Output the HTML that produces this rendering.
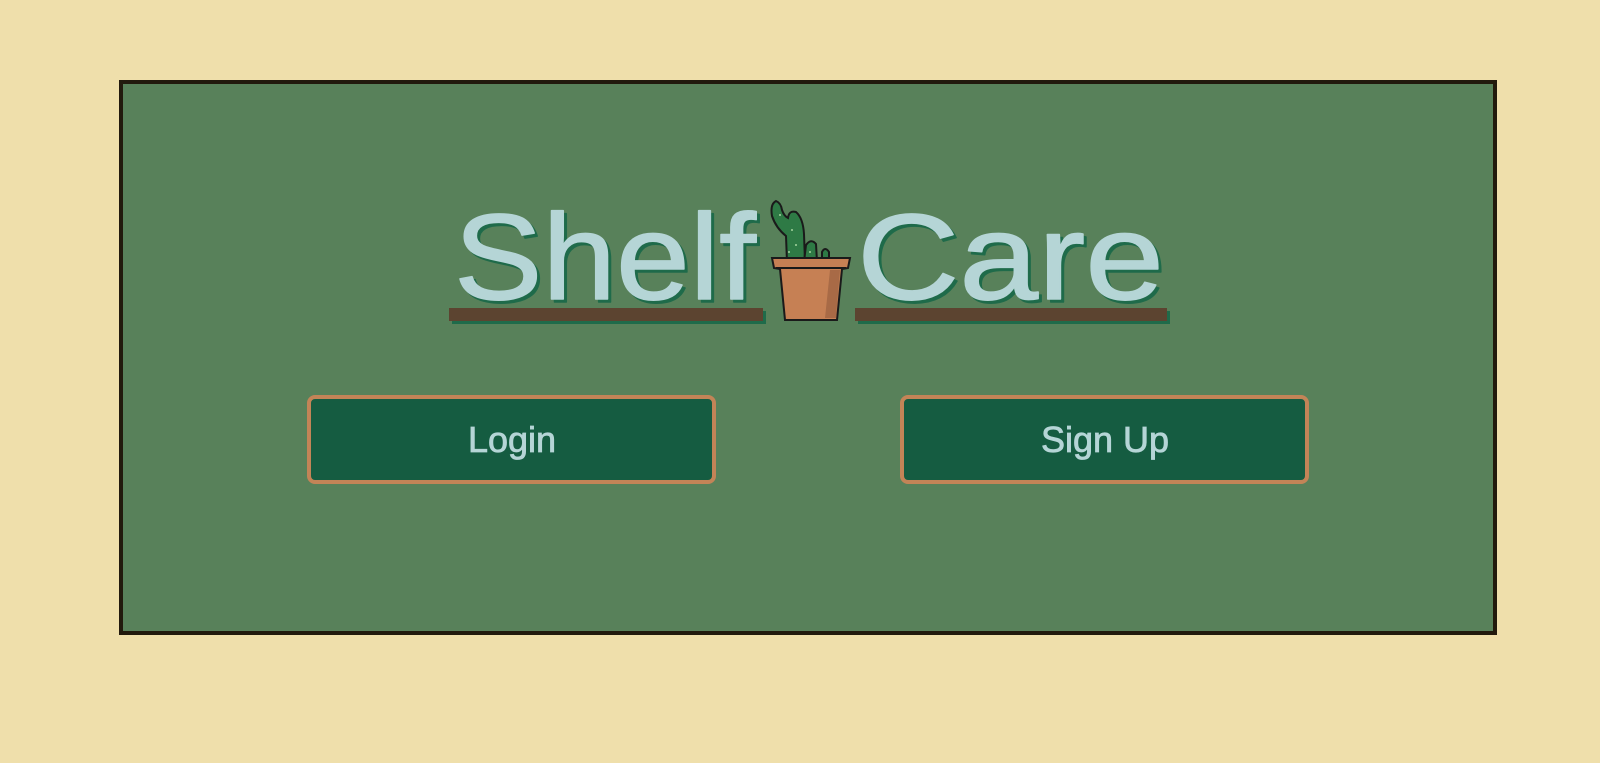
<!DOCTYPE html>
<html><head><meta charset="utf-8"><style>
html,body{margin:0;padding:0;background:#efdfab;width:1600px;height:763px;overflow:hidden}
svg{position:absolute;left:0;top:0}
</style></head><body>
<svg width="1600" height="763" viewBox="0 0 1600 763" xmlns="http://www.w3.org/2000/svg">
<rect x="121" y="82" width="1374" height="551" fill="#58815a" stroke="#221a0d" stroke-width="4"/>
<g font-family="Liberation Sans, sans-serif" font-size="122" stroke-width="1.5" stroke-linejoin="round">
<text x="457" y="302" fill="#1f6b4a" stroke="#1f6b4a" textLength="302" lengthAdjust="spacingAndGlyphs">Shelf</text>
<text x="454" y="299" fill="#b5d5d6" stroke="#b5d5d6" textLength="302" lengthAdjust="spacingAndGlyphs">Shelf</text>
<text x="860" y="302" fill="#1f6b4a" stroke="#1f6b4a" textLength="307" lengthAdjust="spacingAndGlyphs">Care</text>
<text x="857" y="299" fill="#b5d5d6" stroke="#b5d5d6" textLength="307" lengthAdjust="spacingAndGlyphs">Care</text>
</g>
<rect x="452" y="311" width="314" height="13" fill="#1f6b4a"/>
<rect x="449" y="308" width="314" height="13" fill="#5c4430"/>
<rect x="858" y="311" width="312" height="13" fill="#1f6b4a"/>
<rect x="855" y="308" width="312" height="13" fill="#5c4430"/>
<!-- cactus -->
<g stroke="#1a1a1a" stroke-width="2" fill="#2e7a45">
<path d="M787 262 L786 236 Q776 228 772 216 Q770 204 776 201 Q781 203 782 210 Q784 216 788 218 Q789 210 796 212 Q803 218 804 234 L805 262 Z"/>
<path d="M804 262 L806 245 Q811 238 816 244 L817 262 Z"/>
<path d="M822 262 L822 252 Q825 246 829 252 L829 262 Z"/>
</g>
<g fill="#a4d49e"><circle cx="792" cy="230" r="1"/><circle cx="796" cy="245" r="1"/><circle cx="789" cy="252" r="1"/><circle cx="810" cy="252" r="1"/><circle cx="780" cy="215" r="1"/></g>
<path d="M772 258 L850 258 L848 268 L842 269 L837 320 L785 320 L780 269 L774 268 Z" fill="#c68054" stroke="#1a1a1a" stroke-width="2"/>
<path d="M830 270 L840 270 L836 318 L825 318 Z" fill="#a86a46"/>
<line x1="776" y1="268" x2="846" y2="268" stroke="#1a1a1a" stroke-width="2"/>
<!-- buttons -->
<rect x="309" y="397" width="405" height="85" rx="6" fill="#155c41" stroke="#c38457" stroke-width="4"/>
<rect x="902" y="397" width="405" height="85" rx="6" fill="#155c41" stroke="#c38457" stroke-width="4"/>
<g font-family="Liberation Sans, sans-serif" font-size="36" fill="#b5d5d6" stroke="#b5d5d6" stroke-width="0.8" text-anchor="middle">
<text x="512" y="452">Login</text>
<text x="1105" y="452">Sign Up</text>
</g>
</svg>
</body></html>
